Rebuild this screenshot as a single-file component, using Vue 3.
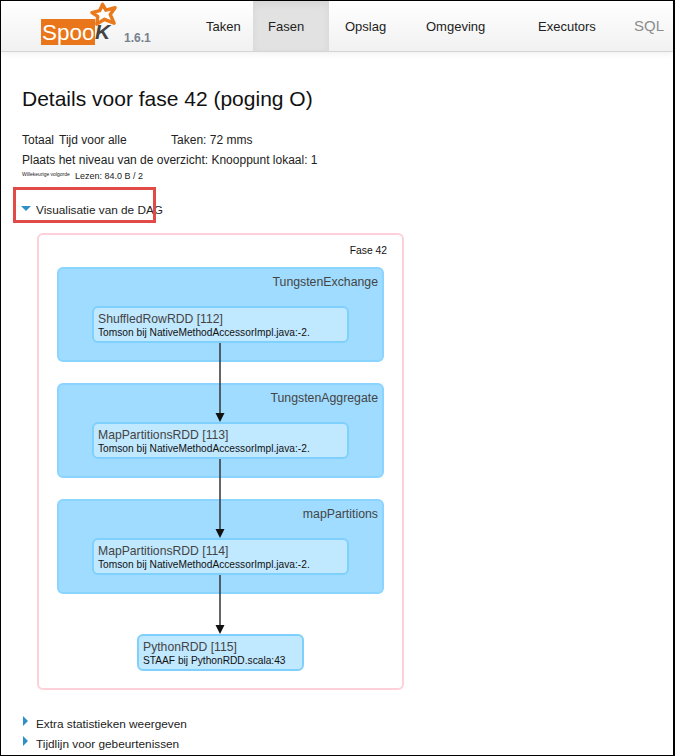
<template>
  <div class="page">
    <header class="navbar">
      <div class="brand">
        <span class="logo">
          <span class="logo-word">Spoo</span><span class="logo-k">K</span>
          <svg class="logo-star" viewBox="0 0 30 26" width="29" height="25">
            <path d="M14 2.500 L17.500 8.500 L27 6 L22 13 L26 22 L16 18 L8 23 L9 15 L3 11 L11 9 Z" fill="#fff" stroke="#e9791a" stroke-width="3.6" stroke-linejoin="round" />
          </svg>
        </span>
        <span class="version">1.6.1</span>
      </div>
      <nav class="tabs">
        <a v-for="t in tabs" :key="t.label" class="tab" :class="{ active: t.active, muted: t.muted }" :style="{ width: t.width + 'px', paddingLeft: t.pad + 'px' }">{{ t.label }}</a>
      </nav>
    </header>

    <main class="content">
      <h3 class="title">Details voor fase 42 (poging O)</h3>
      <div class="summary">
        <div class="line"><span class="total">Totaal</span><span class="alltime">Tijd voor alle</span><span>Taken: 72 mms</span></div>
        <div class="line">Plaats het niveau van de overzicht: Knooppunt lokaal: 1</div>
        <div class="line small-line"><span class="tiny">Willekeurige volgorde</span><span>Lezen: 84.0 B / 2</span></div>
      </div>

      <div class="toggle dag-toggle">
        <span class="arrow-down"></span>
        <span>Visualisatie van de DAG</span>
        <span class="highlight"></span>
      </div>

      <section class="dag">
        <div class="stage-label">Fase 42</div>
        <div v-for="c in clusters" :key="c.name" class="cluster">
          <div class="cluster-name">{{ c.name }}</div>
          <div class="node">
            <div class="node-title">{{ c.title }}</div>
            <div class="node-sub">Tomson bij NativeMethodAccessorImpl.java:-2.</div>
          </div>
        </div>
        <div class="node last">
          <div class="node-title">PythonRDD [115]</div>
          <div class="node-sub">STAAF bij PythonRDD.scala:43</div>
        </div>
        <svg class="edges" width="367" height="457" viewBox="0 0 367 457">
          <g v-for="e in edges" :key="e[0]">
            <line x1="183" :y1="e[0]" x2="183" :y2="e[1] - 8" stroke="#333" stroke-width="1.5" />
            <path :d="`M178.500 ${e[1] - 9} L187.500 ${e[1] - 9} L183 ${e[1]} Z`" fill="#111" />
          </g>
        </svg>
      </section>

      <div class="toggle extra"><span class="arrow-right"></span>Extra statistieken weergeven</div>
      <div class="toggle timeline"><span class="arrow-right"></span>Tijdlijn voor gebeurtenissen</div>
    </main>
  </div>
</template>

<script setup>
const tabs = [
  { label: 'Taken', width: 64, pad: 17 },
  { label: 'Fasen', width: 76, pad: 15, active: true },
  { label: 'Opslag', width: 72, pad: 16 },
  { label: 'Omgeving', width: 106, pad: 25 },
  { label: 'Executors', width: 118, pad: 31 },
  { label: 'SQL', width: 48, pad: 9, muted: true },
]

const clusters = [
  { name: 'TungstenExchange', title: 'ShuffledRowRDD [112]' },
  { name: 'TungstenAggregate', title: 'MapPartitionsRDD [113]' },
  { name: 'mapPartitions', title: 'MapPartitionsRDD [114]' },
]

const edges = [
  [110, 189],
  [226, 305],
  [342, 401],
]
</script>

<style>
html, body {
  margin: 0;
  background: #fff;
}
</style>

<style scoped>
.page {
  width: 675px;
  height: 756px;
  box-sizing: border-box;
  border: 1px solid #000;
  border-width: 1px 2px 1px 1px;
  overflow: hidden;
  font-family: "Liberation Sans", Arial, sans-serif;
  color: #222;
  background: #fff;
}

.navbar {
  height: 50px;
  display: flex;
  background: linear-gradient(#fff, #f1f1f1);
  border-bottom: 1px solid #d4d4d4;
  box-shadow: 0 2px 6px rgba(0, 0, 0, 0.06);
}

.brand {
  width: 188px;
  flex: none;
  position: relative;
  padding-left: 40px;
  box-sizing: border-box;
  display: flex;
}

.logo {
  position: relative;
  margin-top: 18px;
  height: 26px;
  width: 80px;
  display: block;
  line-height: 26px;
}

.logo-word {
  display: inline-block;
  width: 54px;
  height: 26px;
  padding-left: 1px;
  box-sizing: border-box;
  background: #e9761a;
  color: #fff;
  font-size: 22.5px;
  line-height: 28px;
}

.logo-k {
  position: relative;
  z-index: 1;
  font-weight: bold;
  font-style: italic;
  font-size: 21px;
  color: #444;
  vertical-align: top;
  line-height: 25px;
}

.logo-star {
  position: absolute;
  left: 48px;
  top: -17px;
}

.version {
  margin: 30px 0 0 3px;
  font-size: 12px;
  font-weight: bold;
  color: #77818f;
  line-height: 14px;
}

.tabs {
  display: flex;
}

.tab {
  height: 50px;
  line-height: 52px;
  font-size: 13px;
  color: #222;
  box-sizing: border-box;
  white-space: nowrap;
}

.tab.active {
  background: #e2e2e2;
  box-shadow: inset 0 3px 8px rgba(0, 0, 0, 0.06);
}

.tab.muted {
  color: #8c8c8c;
  font-size: 15px;
  line-height: 50px;
}

.content {
  padding: 0 0 0 21px;
}

.title {
  margin: 32px 0 0;
  font-size: 21px;
  line-height: 30px;
  font-weight: 400;
  color: #111;
}

.summary {
  margin-top: 16px;
  font-size: 12px;
}

.line {
  line-height: 20px;
  height: 20px;
  white-space: nowrap;
}

.total {
  margin-right: 5px;
}

.alltime {
  display: inline-block;
  width: 112px;
}

.small-line {
  font-size: 9px;
  height: 14px;
  line-height: 14px;
  margin-top: -3px;
}

.tiny {
  font-size: 5px;
  display: inline-block;
  width: 53px;
  vertical-align: 3px;
}

.toggle {
  font-size: 11.8px;
  position: relative;
  white-space: nowrap;
}

.dag-toggle {
  margin-top: 19px;
  height: 20px;
  line-height: 20px;
  display: flex;
  align-items: center;
  gap: 5px;
}

.arrow-down {
  width: 0;
  height: 0;
  margin-left: -1px;
  border-left: 5px solid transparent;
  border-right: 5px solid transparent;
  border-top: 5px solid #2f8fc9;
  margin-top: -3px;
}

.arrow-right {
  display: inline-block;
  width: 0;
  height: 0;
  margin-left: 1px;
  border-top: 5px solid transparent;
  border-bottom: 5px solid transparent;
  border-left: 5px solid #2f8fc9;
  margin-right: 8px;
  vertical-align: 2px;
}

.highlight {
  position: absolute;
  left: -9px;
  top: -13px;
  width: 143px;
  height: 36px;
  border: 3px solid #e04b47;
  box-sizing: border-box;
  pointer-events: none;
}

.dag {
  position: relative;
  width: 367px;
  height: 457px;
  box-sizing: border-box;
  margin: 13px 0 0 15px;
  padding: 9px 18px 0;
  border: 2px solid #fdd0da;
  border-radius: 6px;
  color: #333;
}

.stage-label {
  text-align: right;
  font-size: 10.3px;
  line-height: 14px;
  color: #111;
  height: 23px;
  margin-right: -3px;
}

.cluster {
  position: relative;
  height: 95px;
  margin-bottom: 21px;
  box-sizing: border-box;
  background: #a0dcff;
  border: 2px solid #8ad4ff;
  border-radius: 6px;
  padding: 37px 0 0 33px;
}

.cluster-name {
  position: absolute;
  top: 6px;
  right: 4px;
  font-size: 12.3px;
  color: #444;
}

.node {
  width: 257px;
  height: 37px;
  box-sizing: border-box;
  background: #c0e8ff;
  border: 2px solid #7fd0fc;
  border-radius: 6px;
  padding: 4px 4px;
}

.node.last {
  width: 167px;
  margin: 40px 0 0 80px;
}

.node-title {
  font-size: 12.2px;
  line-height: 14px;
  color: #444;
}

.node-sub {
  font-size: 10.2px;
  line-height: 13px;
  color: #111;
  white-space: nowrap;
}

.edges {
  position: absolute;
  left: -2px;
  top: -2px;
  pointer-events: none;
}

.extra {
  margin-top: 24px;
  line-height: 20px;
}

.timeline {
  line-height: 20px;
}
</style>
